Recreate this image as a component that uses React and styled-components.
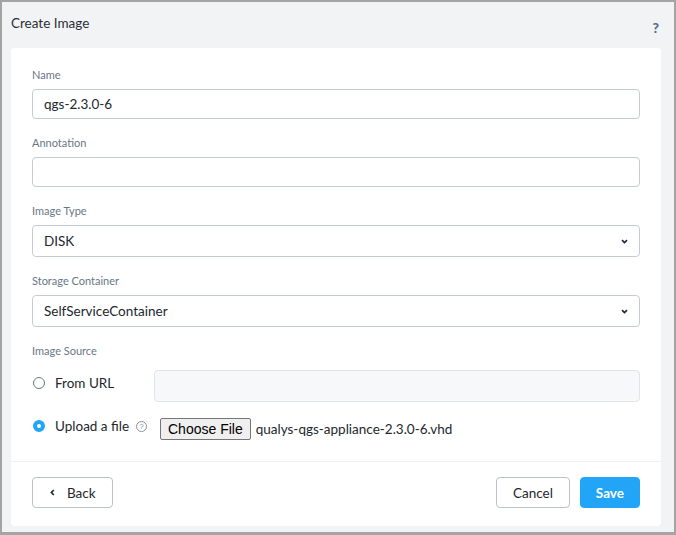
import React from "react";
import { createGlobalStyle, styled } from "styled-components";

const GlobalStyle = createGlobalStyle`
  html, body {
    margin: 0;
    padding: 0;
    background: #f2f3f5;
  }
  * {
    box-sizing: border-box;
  }
`;

const Frame = styled.div`
  width: 676px;
  height: 535px;
  border: 2px solid #a4a4a4;
  border-bottom-width: 3px;
  background: #f2f3f5;
  font-family: Lato, "Open Sans", Arial, sans-serif;
  color: #22272e;
  display: flex;
  flex-direction: column;
`;

const Header = styled.div`
  height: 46px;
  padding: 0 15px 0 9px;
  display: flex;
  align-items: center;
  justify-content: space-between;

  h1 {
    margin: 0 0 4px;
    font-size: 13.5px;
    font-weight: 400;
    color: #2a2f36;
  }
`;

const Help = styled.span`
  font-size: 14px;
  font-weight: 900;
  color: #5a6d82;
  margin-top: 5px;
`;

const Card = styled.div`
  margin: 0 13px 6px 9px;
  flex: 1;
  background: #fff;
  border-radius: 4px;
  display: flex;
  flex-direction: column;
`;

const Body = styled.div`
  padding: 20px 21px 21px;
  border-bottom: 1px solid #eef0f3;
`;

const Field = styled.div`
  margin-bottom: 17px;
`;

const Label = styled.div`
  font-size: 11px;
  line-height: 14px;
  color: #6a7685;
  margin-bottom: ${(p) => p.$gap || 7}px;
`;

const TextBox = styled.div`
  height: ${(p) => p.$h || 30}px;
  border: 1px solid ${(p) => (p.$muted ? "#e1e4e8" : "#c5cad3")};
  background: ${(p) => (p.$muted ? "#f7f8f9" : "#fff")};
  border-radius: 4px;
  padding: 0 11px 0 11px;
  display: flex;
  align-items: center;
  justify-content: space-between;
  font-size: 13.5px;
  color: #22272e;
  flex: ${(p) => (p.$grow ? 1 : "none")};
`;

const Chevron = ({ dir = "down" }) => (
  <svg width="7" height="5" viewBox="0 0 7 5" style={{ transform: dir === "left" ? "rotate(90deg)" : "none" }}>
    <path d="M1 1.2 L3.5 3.6 L6 1.2" fill="none" stroke="#1e2a3a" strokeWidth="1.7" />
  </svg>
);

const SourceRow = styled.div`
  display: flex;
  align-items: ${(p) => (p.$center ? "center" : "flex-start")};
  margin-top: ${(p) => p.$top}px;
`;

const RadioLabel = styled.label`
  display: flex;
  align-items: center;
  gap: 10px;
  padding-left: 1px;
  padding-top: ${(p) => p.$pt || 0}px;
  padding-bottom: ${(p) => p.$pb || 0}px;
  font-size: 13.5px;
  color: #22272e;
  flex: none;
  width: ${(p) => p.$w || 122}px;
`;

const Radio = styled.span`
  width: 12px;
  height: 12px;
  border-radius: 50%;
  flex: none;
  border: ${(p) => (p.$on ? "4px solid #22a5f7" : "1px solid #6f7782")};
  background: #fff;
`;

const HintIcon = styled.span`
  width: 11px;
  height: 11px;
  border-radius: 50%;
  border: 1px solid #8a939e;
  color: #8a939e;
  font-size: 8px;
  line-height: 9px;
  text-align: center;
  font-family: Arial, sans-serif;
  margin-left: -3px;
`;

const FileButton = styled.button`
  font-family: Arial, "Liberation Sans", sans-serif;
  font-size: 14px;
  height: 22px;
  padding: 0 7px;
  background: #efefef;
  border: 1px solid #767676;
  border-radius: 2px;
  color: #000;
`;

const FileName = styled.span`
  margin-left: 5px;
  font-size: 13.5px;
  color: #22272e;
`;

const Footer = styled.div`
  padding: 15px 21px 0;
  display: flex;
  align-items: center;
  gap: 10px;
`;

const Button = styled.button`
  height: 31px;
  padding: 0 ${(p) => p.$px || 15}px;
  border-radius: 4px;
  font-family: inherit;
  font-size: 13.5px;
  font-weight: ${(p) => (p.$primary ? 700 : 400)};
  display: flex;
  align-items: center;
  gap: 11px;
  border: 1px solid ${(p) => (p.$primary ? "#22a5f7" : "#bcc2cc")};
  background: ${(p) => (p.$primary ? "#22a5f7" : "#fff")};
  color: ${(p) => (p.$primary ? "#fff" : "#22272e")};
  margin-left: ${(p) => (p.$push ? "auto" : 0)};
`;

const App = () => {
  return (
    <>
      <GlobalStyle />
      <Frame>
        <Header>
          <h1>Create Image</h1>
          <Help>?</Help>
        </Header>
        <Card>
          <Body>
            <Field>
              <Label>Name</Label>
              <TextBox>qgs-2.3.0-6</TextBox>
            </Field>
            <Field>
              <Label>Annotation</Label>
              <TextBox />
            </Field>
            <Field>
              <Label>Image Type</Label>
              <TextBox $h={32}>
                DISK
                <Chevron />
              </TextBox>
            </Field>
            <Field>
              <Label>Storage Container</Label>
              <TextBox $h={32}>
                SelfServiceContainer
                <Chevron />
              </TextBox>
            </Field>
            <Label $gap={12}>Image Source</Label>
            <SourceRow $top={0}>
              <RadioLabel $pt={5}>
                <Radio />
                From URL
              </RadioLabel>
              <TextBox $h={32} $muted $grow />
            </SourceRow>
            <SourceRow $top={16} $center>
              <RadioLabel $w={128} $pb={6}>
                <Radio $on />
                Upload a file
                <HintIcon>?</HintIcon>
              </RadioLabel>
              <FileButton>Choose File</FileButton>
              <FileName>qualys-qgs-appliance-2.3.0-6.vhd</FileName>
            </SourceRow>
          </Body>
          <Footer>
            <Button $px={16}>
              <Chevron dir="left" />
              Back
            </Button>
            <Button $push $px={16}>Cancel</Button>
            <Button $primary>Save</Button>
          </Footer>
        </Card>
      </Frame>
    </>
  );
};

export default App;
